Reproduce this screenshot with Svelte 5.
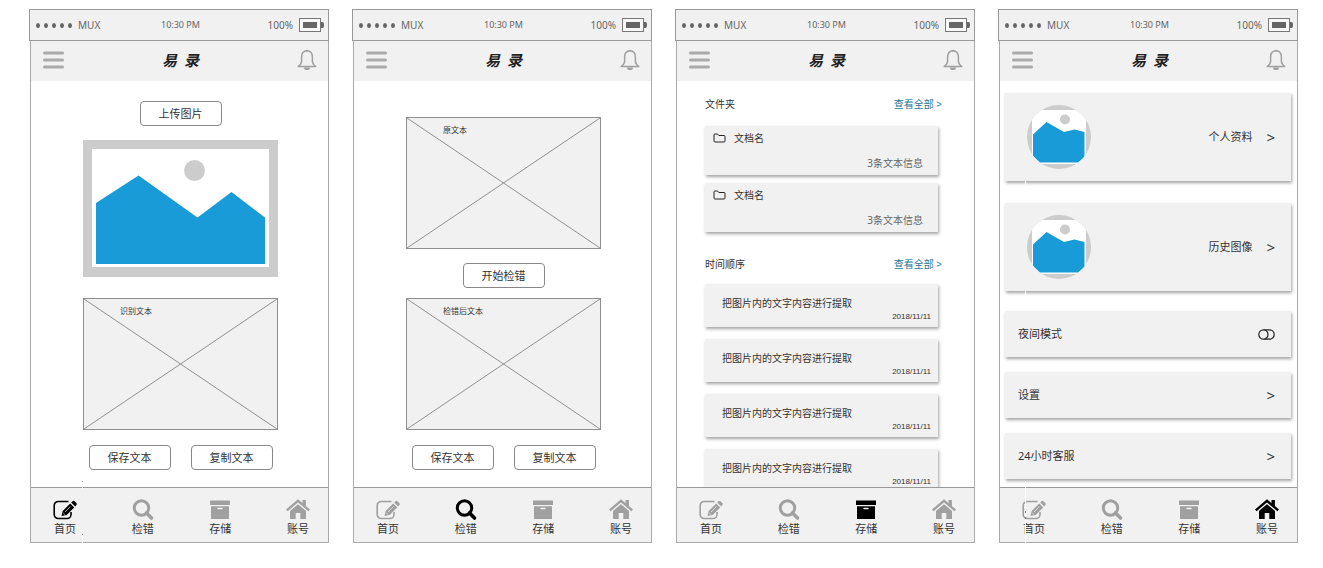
<script>
  const tabs = [
    { id: 'home', label: '首页' },
    { id: 'check', label: '检错' },
    { id: 'storage', label: '存储' },
    { id: 'account', label: '账号' }
  ];
  const screens = ['home', 'check', 'storage', 'account'];
  const folders = ['文档名', '文档名'];
  const records = ['2018/11/11', '2018/11/11', '2018/11/11', '2018/11/11'];
  const profiles = ['个人资料', '历史图像'];
  const settings = ['设置', '24小时客服'];
</script>

{#snippet tabIcon(id)}
  <svg class="tab-icon" viewBox="0 0 24 22" aria-hidden="true">
    {#if id === 'home'}
      <path d="M15.500 2.500H5.200A4 4 0 0 0 1.200 6.500V15.500A4 4 0 0 0 5.200 19.500H14A4 4 0 0 0 18 15.500V13" fill="none" stroke="currentColor" stroke-width="1.600" />
      <path d="M8.500 17l1.200-5 7.500-7.500 4 4L13.700 16z M18.200 3.500l1.300-1.300a1.400 1.400 0 0 1 2 0l1.800 1.800a1.400 1.400 0 0 1 0 2L22.200 7.400z" fill="currentColor" />
      <path d="M12 13l5.500-5.500M10.300 14l1.700 1.700" stroke="#f1f1f1" stroke-width="0.700" />
    {:else if id === 'check'}
      <circle cx="10.500" cy="9" r="7.200" fill="none" stroke="currentColor" stroke-width="3" />
      <path d="M15.500 14l5 5" stroke="currentColor" stroke-width="3.600" stroke-linecap="round" />
    {:else if id === 'storage'}
      <path d="M2 1.500h20v4.500H2zM3 7.200h18V20H3z" fill="currentColor" />
      <path d="M10 9.500h4" stroke="#f1f1f1" stroke-width="1.500" stroke-linecap="round" />
    {:else}
      <path d="M0.800 11.300L12 1.900l11.200 9.400" fill="none" stroke="currentColor" stroke-width="2.400" />
      <path d="M16.500 1h3.400v8l-3.400-2.900zM12 5.200l8 6.700V20h-5.700v-6H9.700v6H4v-8.100z" fill="currentColor" />
    {/if}
  </svg>
{/snippet}

{#snippet placeholder(label)}
  <div class="placeholder">
    <svg viewBox="0 0 195 132" preserveAspectRatio="none" aria-hidden="true">
      <path d="M0 0L195 132M195 0L0 132" stroke="#8f8f8f" />
    </svg>
    <span>{label}</span>
  </div>
{/snippet}

{#snippet textActions()}
  <div class="actions">
    <button class="btn">保存文本</button>
    <button class="btn">复制文本</button>
  </div>
{/snippet}

{#snippet sectionHead(title)}
  <div class="section-head">
    <h2>{title}</h2>
    <a href="#all">查看全部 &gt;</a>
  </div>
{/snippet}

<main>
  {#each screens as screen}
    <section class="phone">
      <div class="status">
        <div class="carrier">
          <span class="dots">{#each Array(5) as _}<i></i>{/each}</span>
          <span>MUX</span>
        </div>
        <span class="time">10:30 PM</span>
        <div class="power">
          <span>100%</span>
          <svg width="26" height="15" viewBox="0 0 26 15" aria-hidden="true">
            <rect x="0.500" y="0.500" width="21" height="13" fill="#f8f8f8" stroke="#777" />
            <rect x="4" y="4" width="14" height="6" fill="#666" />
            <path d="M22 4h1.500q1.500 0 1.500 3t-1.500 3H22z" fill="#666" />
          </svg>
        </div>
      </div>

      <div class="body">
        <header>
          <button class="icon-btn" aria-label="菜单">
            <svg width="21" height="18" viewBox="0 0 21 18" aria-hidden="true">
              <path d="M1.500 2h18M1.500 9h18M1.500 16h18" stroke="#aaa" stroke-width="3" stroke-linecap="round" />
            </svg>
          </button>
          <h1>易&nbsp; 录</h1>
          <button class="icon-btn" aria-label="通知">
            <svg width="20" height="22" viewBox="0 0 20 22" aria-hidden="true">
              <path d="M10 1.800C6.500 2 4.600 4.600 4.600 8v4.500c0 2-1.600 3.500-3.400 5h17.600c-1.800-1.500-3.400-3-3.400-5V8c0-3.400-1.900-6-5.400-6.200z" fill="none" stroke="#a0a0a0" stroke-width="1.500" stroke-linejoin="round" />
              <path d="M8.800 2a1.200 1.200 0 0 1 2.400 0zM7 18.500h6a3 2.600 0 0 1-6 0z" fill="#a0a0a0" />
            </svg>
          </button>
        </header>

        {#if screen === 'home'}
          <div class="content editor">
            <button class="btn">上传图片</button>
            <svg class="picture" viewBox="0 0 195 137" aria-hidden="true">
              <rect width="195" height="137" fill="#ccc" />
              <rect x="9" y="9" width="177" height="118" fill="#fff" />
              <circle cx="111.500" cy="30.500" r="10.500" fill="#ccc" />
              <path d="M13 63L55.500 35.500L114.500 77.500L148.500 52L182 77.500V124H13z" fill="#189bd6" />
            </svg>
            {@render placeholder('识别文本')}
            {@render textActions()}
          </div>
        {:else if screen === 'check'}
          <div class="content editor compare">
            {@render placeholder('原文本')}
            <button class="btn">开始检错</button>
            {@render placeholder('检错后文本')}
            {@render textActions()}
          </div>
        {:else if screen === 'storage'}
          <div class="content storage">
            {@render sectionHead('文件夹')}
            <div class="folders">
              {#each folders as name}
                <article class="card folder">
                  <h3>
                    <svg width="13" height="10" viewBox="0 0 13 10" aria-hidden="true">
                      <path d="M1 8V2Q1 1 2 1h2.500l1.300 1.500H11q1 0 1 1V8q0 1-1 1H2Q1 9 1 8z" fill="none" stroke="#222" />
                    </svg>
                    {name}
                  </h3>
                  <p>3条文本信息</p>
                </article>
              {/each}
            </div>
            {@render sectionHead('时间顺序')}
            <div class="records">
              {#each records as date}
                <article class="card record">
                  <p>把图片内的文字内容进行提取</p>
                  <time>{date}</time>
                </article>
              {/each}
            </div>
          </div>
        {:else}
          <div class="content account">
            <div class="profiles">
              {#each profiles as label}
                <a class="card profile" href="#profile">
                  <svg class="avatar" viewBox="0 0 64 64" aria-hidden="true">
                    <rect width="64" height="64" fill="#ccc" />
                    <rect x="5" y="5" width="54" height="54" fill="#fff" />
                    <circle cx="38" cy="14.500" r="5" fill="#ccc" />
                    <path d="M6 29.500L19.500 17L37 27L47.500 24.500L57.500 27V52L51 57.500H13L6 51z" fill="#189bd6" />
                  </svg>
                  <span>{label}</span>
                  <b>&gt;</b>
                </a>
              {/each}
            </div>
            <div class="settings">
              <label class="card setting">
                夜间模式
                <span class="toggle">
                  <input type="checkbox" />
                  <svg width="17" height="11" viewBox="0 0 17 11" aria-hidden="true">
                    <rect x="0.800" y="0.800" width="15.400" height="9.400" rx="4.700" fill="none" stroke="#222" stroke-width="1.200" />
                    <path d="M6.500 1q3.500 1 3.500 4.500t-3.500 4.500" fill="none" stroke="#222" stroke-width="1.200" />
                  </svg>
                </span>
              </label>
              {#each settings as label}
                <a class="card setting" href="#setting">{label}<b>&gt;</b></a>
              {/each}
            </div>
          </div>
        {/if}

        <nav class:split-home={screen === 'home'} class:split-account={screen === 'account'}>
          {#each tabs as tab}
            <button class="tab" class:active={tab.id === screen}>
              {@render tabIcon(tab.id)}
              <span>{tab.label}</span>
            </button>
          {/each}
        </nav>
      </div>
    </section>
  {/each}
</main>

<style>
  :global(body) {
    background: #fff;
  }
  main {
    box-sizing: border-box;
    height: 100vh;
    padding: 9px 25px 25px 29px;
    display: grid;
    grid-template-columns: repeat(4, minmax(0, 1fr));
    grid-template-rows: minmax(0, 1fr);
    gap: 23px;
    font-family: "Noto Sans", "Noto Sans CJK SC", sans-serif;
    font-size: 11px;
    line-height: 16px;
    color: #333;
  }
  h1, h2, h3, p {
    margin: 0;
    font-weight: 400;
  }
  a {
    color: inherit;
    text-decoration: none;
  }
  button {
    font: inherit;
    color: inherit;
    cursor: pointer;
  }
  .phone {
    display: flex;
    flex-direction: column;
    min-height: 0;
  }
  .status {
    display: grid;
    grid-template-columns: 1fr auto 1fr;
    align-items: center;
    padding: 7px 3px 7px 6px;
    border: 1px solid #999;
    background: #f1f1f1;
    color: #666;
    font-size: 10px;
  }
  .carrier, .power {
    display: flex;
    align-items: center;
    gap: 6px;
  }
  .power {
    justify-content: flex-end;
  }
  .dots {
    display: flex;
    gap: 4px;
  }
  .dots i {
    width: 4px;
    height: 5px;
    border-radius: 50%;
    background: #666;
  }
  .time {
    font-size: 9px;
  }
  .body {
    flex: 1;
    min-height: 0;
    display: flex;
    flex-direction: column;
    margin-left: 1px;
    border: 1px solid #aaa;
    border-width: 0 1px 1px;
  }
  header {
    display: flex;
    align-items: center;
    justify-content: space-between;
    padding: 7px 11px 9px 12px;
    background: #f1f1f1;
  }
  .icon-btn {
    display: flex;
    padding: 0;
    border: 0;
    background: none;
  }
  h1 {
    font-family: "STXingkai", "KaiTi", "Noto Sans CJK SC", sans-serif;
    font-size: 15px;
    line-height: 24px;
    font-weight: 700;
    font-style: italic;
    color: #222;
  }
  .content {
    flex: 1;
    min-height: 0;
    overflow: hidden;
  }
  .editor {
    display: flex;
    flex-direction: column;
    align-items: center;
    padding: 20px 0 0 2px;
  }
  .compare {
    padding-top: 36px;
  }
  .btn {
    box-sizing: border-box;
    width: 82px;
    padding: 4px 0;
    border: 1px solid #888;
    border-radius: 4px;
    background: #fff;
    line-height: 15px;
  }
  .picture {
    width: 195px;
    margin: 14px 0 21px;
  }
  .placeholder {
    position: relative;
    box-sizing: border-box;
    width: 195px;
    min-height: 132px;
    padding: 4px 36px;
    border: 1px solid #8f8f8f;
    background: #f1f1f1;
    font-size: 8px;
    line-height: 16px;
  }
  .placeholder svg {
    position: absolute;
    inset: 0;
    width: 100%;
    height: 100%;
  }
  .placeholder span {
    position: relative;
  }
  .compare > .btn {
    margin: 14px 0 10px;
  }
  .actions {
    display: flex;
    gap: 20px;
    margin-top: 15px;
  }
  .card {
    background: #f1f1f1;
    box-shadow: 1px 2px 3px rgba(0, 0, 0, 0.36);
  }
  .storage {
    padding: 15px 36px 0 28px;
    font-size: 10px;
  }
  .section-head {
    display: flex;
    justify-content: space-between;
    margin-right: -4px;
  }
  h2, h3 {
    font-size: 10px;
  }
  .section-head a {
    color: #27799b;
  }
  .folders {
    display: flex;
    flex-direction: column;
    gap: 8px;
    margin: 14px 0 24px;
  }
  .folder {
    padding: 4px 15px 4px 8px;
  }
  h3 {
    display: flex;
    align-items: center;
    gap: 8px;
  }
  .folder p {
    margin-top: 9px;
    text-align: right;
    color: #666;
  }
  .records {
    display: flex;
    flex-direction: column;
    gap: 12px;
    margin-top: 12px;
  }
  .record {
    padding: 11px 7px 4px 17px;
    display: flex;
    flex-direction: column;
  }
  .record time {
    align-self: flex-end;
    font-family: "Liberation Sans", sans-serif;
    font-size: 8px;
    line-height: 12px;
  }
  .account {
    padding: 12px 6px 0 5px;
  }
  .profiles {
    display: flex;
    flex-direction: column;
    gap: 22px;
    margin-bottom: 20px;
  }
  .profile, .setting {
    display: flex;
    align-items: center;
    color: #333;
  }
  .profile {
    position: relative;
    padding: 12px 16px 12px 22px;
  }
  .profile::after {
    content: "";
    position: absolute;
    left: 20px;
    bottom: -4px;
    width: 1px;
    height: 5px;
    background: #fff;
  }
  .avatar {
    width: 64px;
    height: 64px;
    margin-right: auto;
    border-radius: 50%;
  }
  .account b {
    margin-left: 14px;
    font-size: 15px;
    font-weight: 400;
  }
  .settings {
    display: flex;
    flex-direction: column;
    gap: 15px;
  }
  .setting {
    justify-content: space-between;
    padding: 15px 16px 15px 13px;
  }
  .toggle {
    position: relative;
    display: flex;
  }
  .toggle input {
    position: absolute;
    inset: 0;
    width: 100%;
    height: 100%;
    margin: 0;
    opacity: 0;
  }
  nav {
    position: relative;
    display: flex;
    justify-content: space-between;
    padding: 11px 18px 5px 22px;
    border-top: 1px solid #999;
    background: #f1f1f1;
  }
  .split-home::after, .split-account::after {
    content: "";
    position: absolute;
    top: -7px;
    bottom: -1px;
    width: 1px;
  }
  .split-home::after {
    left: 51px;
    background: linear-gradient(#999 1px, #fff 1px 8px, transparent 8px calc(100% - 9px), #999 calc(100% - 9px) calc(100% - 8px), #fff calc(100% - 8px));
  }
  .split-account::after {
    left: 25px;
    background: linear-gradient(#fff 30px, #777 30px 32px, #fff 32px 36px, #777 36px 38px, #fff 38px);
  }
  .tab {
    display: flex;
    flex-direction: column;
    align-items: center;
    width: 24px;
    padding: 0;
    border: 0;
    background: none;
    white-space: nowrap;
  }
  .tab-icon {
    width: 24px;
    height: 22px;
    color: #a0a0a0;
  }
  .tab.active .tab-icon {
    color: #000;
  }
</style>
